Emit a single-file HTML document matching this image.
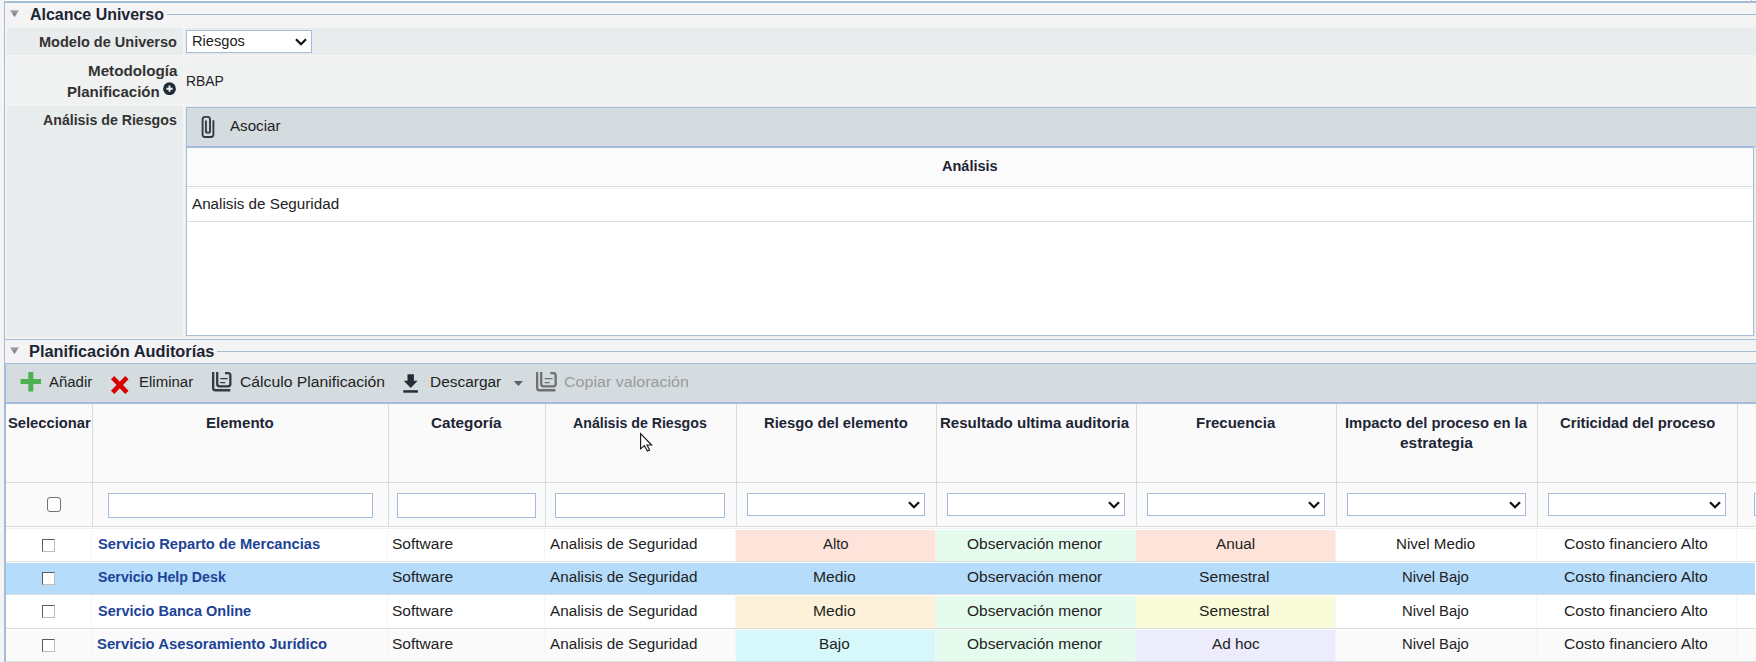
<!DOCTYPE html>
<html><head><meta charset="utf-8"><style>
html,body{margin:0;padding:0}
body{width:1756px;height:662px;overflow:hidden;position:relative;background:#f4f4f4;font-family:"Liberation Sans",sans-serif}
body>div,body>span{position:absolute}
span{white-space:nowrap;line-height:normal;transform-origin:0 0}
svg{display:block}
</style></head><body>
<div style="left:5px;top:0px;width:1746px;height:1px;background:#ffffff;"></div>
<div style="left:1751px;top:0px;width:1px;height:1px;background:#a4bcd7;"></div>
<div style="left:1752px;top:0px;width:4px;height:1px;background:#f8f8f8;"></div>
<div style="left:4px;top:1px;width:1752px;height:2px;background:#a4bcd7;"></div>
<div style="left:4px;top:1px;width:1px;height:661px;background:#a4bcd7;"></div>
<div style="left:10px;top:10px;width:10px;height:8px;background:none"><svg width="10" height="8" viewBox="0 0 10 8"><defs><linearGradient id="g10" x1="0" y1="0" x2="0" y2="1"><stop offset="0" stop-color="#a8a8a8"/><stop offset="1" stop-color="#6e6e6e"/></linearGradient></defs><polygon points="0,0.3 9,0.3 4.5,6.9" fill="url(#g10)"/></svg></div>
<span style="left:30.12px;top:6.00px;font-size:16px;font-weight:bold;color:#1d2535;transform:scaleX(0.9973)">Alcance Universo</span>
<div style="left:167px;top:14px;width:1589px;height:1px;background:#a4bcd7;"></div>
<div style="left:7px;top:28px;width:176px;height:27px;background:#e9ecec;"></div>
<div style="left:185px;top:28px;width:1571px;height:27px;background:#e9ecec;"></div>
<div style="left:7px;top:57px;width:176px;height:47px;background:#f0f1f1;"></div>
<div style="left:185px;top:57px;width:1571px;height:47px;background:#f0f1f1;"></div>
<div style="left:7px;top:106px;width:176px;height:231px;background:#e9ecec;"></div>
<div style="left:185px;top:106px;width:1571px;height:231px;background:#e9ecec;"></div>
<span style="left:39.48px;top:34.00px;font-size:14px;font-weight:bold;color:#333;transform:scaleX(1.0366)">Modelo de Universo</span>
<div style="left:186px;top:30px;width:126px;height:23px;background:#fff;box-sizing:border-box;border:1px solid #a4bcd7"></div>
<span style="left:191.83px;top:33.00px;font-size:14px;font-weight:normal;color:#222;transform:scaleX(1.0452)">Riesgos</span>
<div style="left:294px;top:37px;width:14px;height:10px;background:none"><svg width="14" height="10" viewBox="0 0 14 10"><path d="M2 2.2 L7 7.2 L12 2.2" fill="none" stroke="#111" stroke-width="2.3"/></svg></div>
<span style="left:87.86px;top:63.00px;font-size:14px;font-weight:bold;color:#333;transform:scaleX(1.0846)">Metodología</span>
<span style="left:66.92px;top:84.00px;font-size:14px;font-weight:bold;color:#333;transform:scaleX(1.0731)">Planificación</span>
<div style="left:163px;top:82px;width:13px;height:13px;background:none"><svg width="13" height="13" viewBox="0 0 13 13"><circle cx="6.5" cy="6.7" r="6.4" fill="#1f2a37"/><path d="M6.5 3.6V9.8M3.4 6.7H9.6" stroke="#f4f4f4" stroke-width="1.9"/></svg></div>
<span style="left:185.51px;top:73.00px;font-size:14px;font-weight:normal;color:#222;transform:scaleX(0.9906)">RBAP</span>
<span style="left:43.44px;top:112.00px;font-size:14px;font-weight:bold;color:#333;transform:scaleX(1.0115)">Análisis de Riesgos</span>
<div style="left:186px;top:107px;width:1570px;height:40px;background:#d4dcdf;box-sizing:border-box;border:1px solid #a4bcd7;border-right:none"></div>
<div style="left:200px;top:114px;width:16px;height:26px;background:none"><svg width="16" height="26" viewBox="0 0 16 26"><path d="M13.4 6.3 V20.5 Q13.4 23 11 23 H5 Q2.6 23 2.6 20.5 V5.5 Q2.6 2.9 5 2.9 H7.7 Q10 2.9 10 5.5 V17 Q10 18.6 8.5 18.6 H7.5 Q5.9 18.6 5.9 17 V6.6" fill="none" stroke="#353c45" stroke-width="1.9"/></svg></div>
<span style="left:229.62px;top:118.00px;font-size:14px;font-weight:normal;color:#222;transform:scaleX(1.0821)">Asociar</span>
<div style="left:186px;top:147px;width:1568px;height:189px;background:#ffffff;box-sizing:border-box;border-left:1px solid #a4bcd7;border-right:1px solid #a4bcd7;border-bottom:1px solid #a4bcd7"></div>
<div style="left:187px;top:147px;width:1566px;height:1px;background:#a4bcd7;"></div>
<div style="left:187px;top:148px;width:1566px;height:38px;background:#fbfbfb;"></div>
<div style="left:187px;top:186px;width:1566px;height:1px;background:#d5dcdc;"></div>
<div style="left:187px;top:188px;width:1566px;height:1px;background:#eef2f2;"></div>
<span style="left:942.12px;top:158.00px;font-size:14px;font-weight:bold;color:#1d2535;transform:scaleX(1.0367)">Análisis</span>
<div style="left:187px;top:221px;width:1566px;height:1px;background:#d9dfdf;"></div>
<span style="left:192.12px;top:196.00px;font-size:14px;font-weight:normal;color:#222;transform:scaleX(1.0862)">Analisis de Seguridad</span>
<div style="left:4px;top:339px;width:1752px;height:1px;background:#a4bcd7;"></div>
<div style="left:10px;top:347px;width:10px;height:8px;background:none"><svg width="10" height="8" viewBox="0 0 10 8"><defs><linearGradient id="g347" x1="0" y1="0" x2="0" y2="1"><stop offset="0" stop-color="#a8a8a8"/><stop offset="1" stop-color="#6e6e6e"/></linearGradient></defs><polygon points="0,0.3 9,0.3 4.5,6.9" fill="url(#g347)"/></svg></div>
<span style="left:29.42px;top:343.00px;font-size:16px;font-weight:bold;color:#1d2535;transform:scaleX(1.0205)">Planificación Auditorías</span>
<div style="left:217px;top:351px;width:1539px;height:1px;background:#a4bcd7;"></div>
<div style="left:5px;top:363px;width:1751px;height:41px;background:#d4dcdf;box-sizing:border-box;border-top:1px solid #a4bcd7;border-bottom:1px solid #a4bcd7;border-left:1px solid #a4bcd7"></div>
<div style="left:20px;top:372px;width:21px;height:20px;background:none"><svg width="21" height="20" viewBox="0 0 21 20"><path d="M0.6 7.1H21V11.9H0.6Z M8.3 0H13.3V19.6H8.3Z" fill="#4caf50"/></svg></div>
<span style="left:49.00px;top:374.00px;font-size:14px;font-weight:normal;color:#222;transform:scaleX(1.0675)">Añadir</span>
<div style="left:111px;top:375.5px;width:18px;height:19px;background:none"><svg width="18" height="19" viewBox="0 0 18 19"><path d="M1.6 1.6 L15.9 16.3 M15.9 1.6 L1.6 16.3" stroke="#d90000" stroke-width="4.6"/></svg></div>
<span style="left:139.43px;top:374.00px;font-size:14px;font-weight:normal;color:#222;transform:scaleX(1.0709)">Eliminar</span>
<div style="left:210px;top:370px;width:26px;height:24px;background:none"><svg width="26" height="24" viewBox="0 0 26 24"><path d="M3.15 2V18 Q3.15 20.25 5.4 20.25 H20.30" fill="none" stroke="#353b44" stroke-width="2.3"/><path d="M7.2 2V14 Q7.2 16.3 9.5 16.3 H18.05 Q20.35 16.3 20.35 14 V5.4 Q20.35 3.15 18.05 3.15 H15.00" fill="none" stroke="#353b44" stroke-width="2.3"/><path d="M10.70 8.6H17.20M10.70 12.6H14.60" stroke="#353b44" stroke-width="1.4" stroke-linecap="round"/></svg></div>
<span style="left:239.86px;top:374.00px;font-size:14px;font-weight:normal;color:#222;transform:scaleX(1.1231)">Cálculo Planificación</span>
<div style="left:402px;top:373px;width:17px;height:21px;background:none"><svg width="17" height="21" viewBox="0 0 17 21"><path d="M5.5 1.3H11.9V7.7H15.7L8.7 14.9L1.7 7.7H5.5Z" fill="#252d38"/><rect x="1.3" y="17.2" width="14.6" height="2.5" fill="#252d38"/></svg></div>
<span style="left:430.40px;top:374.00px;font-size:14px;font-weight:normal;color:#222;transform:scaleX(1.1030)">Descargar</span>
<div style="left:513px;top:380px;width:11px;height:7px;background:none"><svg width="11" height="7" viewBox="0 0 11 7"><polygon points="0.8,0.9 9.9,0.9 5.35,6" fill="#56616b"/></svg></div>
<div style="left:534px;top:370px;width:26px;height:24px;background:none"><svg width="26" height="24" viewBox="0 0 26 24"><path d="M3.15 2V18 Q3.15 20.25 5.4 20.25 H21.34" fill="none" stroke="#707070" stroke-width="2.3"/><path d="M7.2 2V14 Q7.2 16.3 9.5 16.3 H19.35 Q21.65 16.3 21.65 14 V5.4 Q21.65 3.15 19.35 3.15 H16.30" fill="none" stroke="#707070" stroke-width="2.3"/><path d="M11.09 8.6H18.11M11.09 12.6H15.25" stroke="#707070" stroke-width="1.4" stroke-linecap="round"/></svg></div>
<span style="left:564.04px;top:374.00px;font-size:14px;font-weight:normal;color:#9a9a9a;transform:scaleX(1.1461)">Copiar valoración</span>
<div style="left:5px;top:404px;width:1751px;height:258px;background:#ffffff;box-sizing:border-box;border-left:1px solid #a4bcd7"></div>
<div style="left:6px;top:404px;width:1750px;height:78px;background:#fafafa;"></div>
<div style="left:6px;top:402px;width:1750px;height:1px;background:#a4bcd7;"></div>
<div style="left:6px;top:482px;width:1750px;height:1px;background:#d5dcdc;"></div>
<div style="left:6px;top:483px;width:1750px;height:43px;background:#fafafa;"></div>
<div style="left:6px;top:526px;width:1750px;height:1px;background:#d5dcdc;"></div>
<div style="left:6px;top:528px;width:1750px;height:1px;background:#eef2f2;"></div>
<div style="left:92px;top:404px;width:1px;height:122px;background:#d5dcdc;"></div>
<div style="left:388px;top:404px;width:1px;height:122px;background:#d5dcdc;"></div>
<div style="left:545px;top:404px;width:1px;height:122px;background:#d5dcdc;"></div>
<div style="left:736px;top:404px;width:1px;height:122px;background:#d5dcdc;"></div>
<div style="left:936px;top:404px;width:1px;height:122px;background:#d5dcdc;"></div>
<div style="left:1136px;top:404px;width:1px;height:122px;background:#d5dcdc;"></div>
<div style="left:1336px;top:404px;width:1px;height:122px;background:#d5dcdc;"></div>
<div style="left:1537px;top:404px;width:1px;height:122px;background:#d5dcdc;"></div>
<div style="left:1737px;top:404px;width:1px;height:122px;background:#d5dcdc;"></div>
<span style="left:7.50px;top:415.00px;font-size:14px;font-weight:bold;color:#1d2535;transform:scaleX(1.0527)">Seleccionar</span>
<span style="left:205.54px;top:415.00px;font-size:14px;font-weight:bold;color:#1d2535;transform:scaleX(1.0759)">Elemento</span>
<span style="left:430.62px;top:415.00px;font-size:14px;font-weight:bold;color:#1d2535;transform:scaleX(1.0900)">Categoría</span>
<span style="left:573.06px;top:415.00px;font-size:14px;font-weight:bold;color:#1d2535;transform:scaleX(1.0115)">Análisis de Riesgos</span>
<span style="left:763.86px;top:415.00px;font-size:14px;font-weight:bold;color:#1d2535;transform:scaleX(1.0557)">Riesgo del elemento</span>
<span style="left:940.36px;top:415.00px;font-size:14px;font-weight:bold;color:#1d2535;transform:scaleX(1.0756)">Resultado ultima auditoria</span>
<span style="left:1195.80px;top:415.00px;font-size:14px;font-weight:bold;color:#1d2535;transform:scaleX(1.0718)">Frecuencia</span>
<span style="left:1344.86px;top:415.00px;font-size:14px;font-weight:bold;color:#1d2535;transform:scaleX(1.0580)">Impacto del proceso en la</span>
<span style="left:1399.94px;top:435.00px;font-size:14px;font-weight:bold;color:#1d2535;transform:scaleX(1.1019)">estrategia</span>
<span style="left:1559.50px;top:415.00px;font-size:14px;font-weight:bold;color:#1d2535;transform:scaleX(1.0560)">Criticidad del proceso</span>
<div style="left:46.5px;top:497px;width:14.5px;height:14.5px;background:#fff;box-sizing:border-box;border:1px solid #707070;border-radius:3px"></div>
<div style="left:108px;top:493px;width:265px;height:25px;background:#fff;box-sizing:border-box;border:1px solid #a4bcd7"></div>
<div style="left:397px;top:493px;width:139px;height:25px;background:#fff;box-sizing:border-box;border:1px solid #a4bcd7"></div>
<div style="left:555px;top:493px;width:170px;height:25px;background:#fff;box-sizing:border-box;border:1px solid #a4bcd7"></div>
<div style="left:747px;top:493px;width:178px;height:23px;background:#fff;box-sizing:border-box;border:1px solid #a4bcd7"></div>
<div style="left:906.5px;top:500px;width:14px;height:10px;background:none"><svg width="14" height="10" viewBox="0 0 14 10"><path d="M2 2.2 L7 7.2 L12 2.2" fill="none" stroke="#111" stroke-width="2.3"/></svg></div>
<div style="left:947px;top:493px;width:178px;height:23px;background:#fff;box-sizing:border-box;border:1px solid #a4bcd7"></div>
<div style="left:1106.5px;top:500px;width:14px;height:10px;background:none"><svg width="14" height="10" viewBox="0 0 14 10"><path d="M2 2.2 L7 7.2 L12 2.2" fill="none" stroke="#111" stroke-width="2.3"/></svg></div>
<div style="left:1147px;top:493px;width:178px;height:23px;background:#fff;box-sizing:border-box;border:1px solid #a4bcd7"></div>
<div style="left:1306.5px;top:500px;width:14px;height:10px;background:none"><svg width="14" height="10" viewBox="0 0 14 10"><path d="M2 2.2 L7 7.2 L12 2.2" fill="none" stroke="#111" stroke-width="2.3"/></svg></div>
<div style="left:1347px;top:493px;width:179px;height:23px;background:#fff;box-sizing:border-box;border:1px solid #a4bcd7"></div>
<div style="left:1507.5px;top:500px;width:14px;height:10px;background:none"><svg width="14" height="10" viewBox="0 0 14 10"><path d="M2 2.2 L7 7.2 L12 2.2" fill="none" stroke="#111" stroke-width="2.3"/></svg></div>
<div style="left:1548px;top:493px;width:178px;height:23px;background:#fff;box-sizing:border-box;border:1px solid #a4bcd7"></div>
<div style="left:1707.5px;top:500px;width:14px;height:10px;background:none"><svg width="14" height="10" viewBox="0 0 14 10"><path d="M2 2.2 L7 7.2 L12 2.2" fill="none" stroke="#111" stroke-width="2.3"/></svg></div>
<div style="left:1754px;top:493px;width:16px;height:23px;background:#fff;box-sizing:border-box;border:1px solid #a4bcd7"></div>
<div style="left:6px;top:530px;width:1750px;height:31px;background:#ffffff;"></div>
<div style="left:6px;top:561px;width:1750px;height:1px;background:#d9dfdf;"></div>
<div style="left:736px;top:530px;width:199px;height:31px;background:#fde3d9;"></div>
<div style="left:936px;top:530px;width:199px;height:31px;background:#e5fbee;"></div>
<div style="left:1136px;top:530px;width:199px;height:31px;background:#fde3d9;"></div>
<div style="left:91px;top:530px;width:1px;height:31px;background:#f4f6f6;"></div>
<div style="left:387px;top:530px;width:1px;height:31px;background:#f4f6f6;"></div>
<div style="left:544px;top:530px;width:1px;height:31px;background:#f4f6f6;"></div>
<div style="left:735px;top:530px;width:1px;height:31px;background:#f4f6f6;"></div>
<div style="left:935px;top:530px;width:1px;height:31px;background:#f4f6f6;"></div>
<div style="left:1135px;top:530px;width:1px;height:31px;background:#f4f6f6;"></div>
<div style="left:1335px;top:530px;width:1px;height:31px;background:#f4f6f6;"></div>
<div style="left:1536px;top:530px;width:1px;height:31px;background:#f4f6f6;"></div>
<div style="left:1736px;top:530px;width:1px;height:31px;background:#f4f6f6;"></div>
<div style="left:42px;top:539px;width:13px;height:13px;background:#fff;box-sizing:border-box;border:1px solid #5c5c5c;border-right-color:#bdbdbd;border-bottom-color:#bdbdbd"></div>
<span style="left:97.50px;top:536.00px;font-size:14px;font-weight:bold;color:#1c4396;transform:scaleX(1.0494)">Servicio Reparto de Mercancias</span>
<span style="left:392.48px;top:536.00px;font-size:14px;font-weight:normal;color:#222;transform:scaleX(1.1071)">Software</span>
<span style="left:549.62px;top:536.00px;font-size:14px;font-weight:normal;color:#222;transform:scaleX(1.0895)">Analisis de Seguridad</span>
<span style="left:822.94px;top:536.00px;font-size:14px;font-weight:normal;color:#222;transform:scaleX(1.0634)">Alto</span>
<span style="left:967.00px;top:536.00px;font-size:14px;font-weight:normal;color:#222;transform:scaleX(1.1066)">Observación menor</span>
<span style="left:1216.38px;top:536.00px;font-size:14px;font-weight:normal;color:#222;transform:scaleX(1.0909)">Anual</span>
<span style="left:1395.98px;top:536.00px;font-size:14px;font-weight:normal;color:#222;transform:scaleX(1.0817)">Nivel Medio</span>
<span style="left:1564.36px;top:536.00px;font-size:14px;font-weight:normal;color:#222;transform:scaleX(1.1200)">Costo financiero Alto</span>
<div style="left:6px;top:563px;width:1749px;height:31px;background:#b5dcfb;"></div>
<div style="left:6px;top:594px;width:1750px;height:1px;background:#d9dfdf;"></div>
<div style="left:42px;top:572px;width:13px;height:13px;background:#fff;box-sizing:border-box;border:1px solid #5c5c5c;border-right-color:#bdbdbd;border-bottom-color:#bdbdbd"></div>
<span style="left:97.50px;top:569.00px;font-size:14px;font-weight:bold;color:#1c4396;transform:scaleX(1.0137)">Servicio Help Desk</span>
<span style="left:392.48px;top:569.00px;font-size:14px;font-weight:normal;color:#222;transform:scaleX(1.1071)">Software</span>
<span style="left:549.62px;top:569.00px;font-size:14px;font-weight:normal;color:#222;transform:scaleX(1.0895)">Analisis de Seguridad</span>
<span style="left:813.38px;top:569.00px;font-size:14px;font-weight:normal;color:#222;transform:scaleX(1.1198)">Medio</span>
<span style="left:967.00px;top:569.00px;font-size:14px;font-weight:normal;color:#222;transform:scaleX(1.1066)">Observación menor</span>
<span style="left:1199.48px;top:569.00px;font-size:14px;font-weight:normal;color:#222;transform:scaleX(1.1181)">Semestral</span>
<span style="left:1402.32px;top:569.00px;font-size:14px;font-weight:normal;color:#222;transform:scaleX(1.0594)">Nivel Bajo</span>
<span style="left:1564.36px;top:569.00px;font-size:14px;font-weight:normal;color:#222;transform:scaleX(1.1200)">Costo financiero Alto</span>
<div style="left:6px;top:596px;width:1750px;height:32px;background:#ffffff;"></div>
<div style="left:6px;top:628px;width:1750px;height:1px;background:#d9dfdf;"></div>
<div style="left:736px;top:596px;width:199px;height:32px;background:#fdf2d9;"></div>
<div style="left:936px;top:596px;width:199px;height:32px;background:#e5fbee;"></div>
<div style="left:1136px;top:596px;width:199px;height:32px;background:#fafcd9;"></div>
<div style="left:91px;top:596px;width:1px;height:32px;background:#f4f6f6;"></div>
<div style="left:387px;top:596px;width:1px;height:32px;background:#f4f6f6;"></div>
<div style="left:544px;top:596px;width:1px;height:32px;background:#f4f6f6;"></div>
<div style="left:735px;top:596px;width:1px;height:32px;background:#f4f6f6;"></div>
<div style="left:935px;top:596px;width:1px;height:32px;background:#f4f6f6;"></div>
<div style="left:1135px;top:596px;width:1px;height:32px;background:#f4f6f6;"></div>
<div style="left:1335px;top:596px;width:1px;height:32px;background:#f4f6f6;"></div>
<div style="left:1536px;top:596px;width:1px;height:32px;background:#f4f6f6;"></div>
<div style="left:1736px;top:596px;width:1px;height:32px;background:#f4f6f6;"></div>
<div style="left:42px;top:605px;width:13px;height:13px;background:#fff;box-sizing:border-box;border:1px solid #5c5c5c;border-right-color:#bdbdbd;border-bottom-color:#bdbdbd"></div>
<span style="left:97.50px;top:603.00px;font-size:14px;font-weight:bold;color:#1c4396;transform:scaleX(1.0360)">Servicio Banca Online</span>
<span style="left:392.48px;top:603.00px;font-size:14px;font-weight:normal;color:#222;transform:scaleX(1.1071)">Software</span>
<span style="left:549.62px;top:603.00px;font-size:14px;font-weight:normal;color:#222;transform:scaleX(1.0895)">Analisis de Seguridad</span>
<span style="left:813.38px;top:603.00px;font-size:14px;font-weight:normal;color:#222;transform:scaleX(1.1198)">Medio</span>
<span style="left:967.00px;top:603.00px;font-size:14px;font-weight:normal;color:#222;transform:scaleX(1.1066)">Observación menor</span>
<span style="left:1199.48px;top:603.00px;font-size:14px;font-weight:normal;color:#222;transform:scaleX(1.1181)">Semestral</span>
<span style="left:1402.32px;top:603.00px;font-size:14px;font-weight:normal;color:#222;transform:scaleX(1.0594)">Nivel Bajo</span>
<span style="left:1564.36px;top:603.00px;font-size:14px;font-weight:normal;color:#222;transform:scaleX(1.1200)">Costo financiero Alto</span>
<div style="left:6px;top:630px;width:1750px;height:31px;background:#fafafa;"></div>
<div style="left:6px;top:661px;width:1750px;height:1px;background:#d9dfdf;"></div>
<div style="left:736px;top:630px;width:199px;height:31px;background:#d6f8fa;"></div>
<div style="left:936px;top:630px;width:199px;height:31px;background:#e5fbee;"></div>
<div style="left:1136px;top:630px;width:199px;height:31px;background:#ececfc;"></div>
<div style="left:91px;top:630px;width:1px;height:31px;background:#f4f6f6;"></div>
<div style="left:387px;top:630px;width:1px;height:31px;background:#f4f6f6;"></div>
<div style="left:544px;top:630px;width:1px;height:31px;background:#f4f6f6;"></div>
<div style="left:735px;top:630px;width:1px;height:31px;background:#f4f6f6;"></div>
<div style="left:935px;top:630px;width:1px;height:31px;background:#f4f6f6;"></div>
<div style="left:1135px;top:630px;width:1px;height:31px;background:#f4f6f6;"></div>
<div style="left:1335px;top:630px;width:1px;height:31px;background:#f4f6f6;"></div>
<div style="left:1536px;top:630px;width:1px;height:31px;background:#f4f6f6;"></div>
<div style="left:1736px;top:630px;width:1px;height:31px;background:#f4f6f6;"></div>
<div style="left:42px;top:639px;width:13px;height:13px;background:#fff;box-sizing:border-box;border:1px solid #5c5c5c;border-right-color:#bdbdbd;border-bottom-color:#bdbdbd"></div>
<span style="left:96.80px;top:636.00px;font-size:14px;font-weight:bold;color:#1c4396;transform:scaleX(1.0582)">Servicio Asesoramiento Jurídico</span>
<span style="left:392.48px;top:636.00px;font-size:14px;font-weight:normal;color:#222;transform:scaleX(1.1071)">Software</span>
<span style="left:549.62px;top:636.00px;font-size:14px;font-weight:normal;color:#222;transform:scaleX(1.0895)">Analisis de Seguridad</span>
<span style="left:819.41px;top:636.00px;font-size:14px;font-weight:normal;color:#222;transform:scaleX(1.0949)">Bajo</span>
<span style="left:967.00px;top:636.00px;font-size:14px;font-weight:normal;color:#222;transform:scaleX(1.1066)">Observación menor</span>
<span style="left:1212.00px;top:636.00px;font-size:14px;font-weight:normal;color:#222;transform:scaleX(1.0958)">Ad hoc</span>
<span style="left:1402.32px;top:636.00px;font-size:14px;font-weight:normal;color:#222;transform:scaleX(1.0594)">Nivel Bajo</span>
<span style="left:1564.36px;top:636.00px;font-size:14px;font-weight:normal;color:#222;transform:scaleX(1.1200)">Costo financiero Alto</span>
<div style="left:634px;top:428px;width:26px;height:30px;background:none"><svg width="26" height="30" viewBox="0 0 26 30"><path d="M6.6 5.6 L6.6 20.9 L10.4 17.7 L13.4 23.0 L15.6 21.9 L13.0 17.0 L17.6 17.0 Z" fill="#fff" stroke="#111" stroke-width="1.1" stroke-linejoin="miter"/></svg></div>
</body></html>
